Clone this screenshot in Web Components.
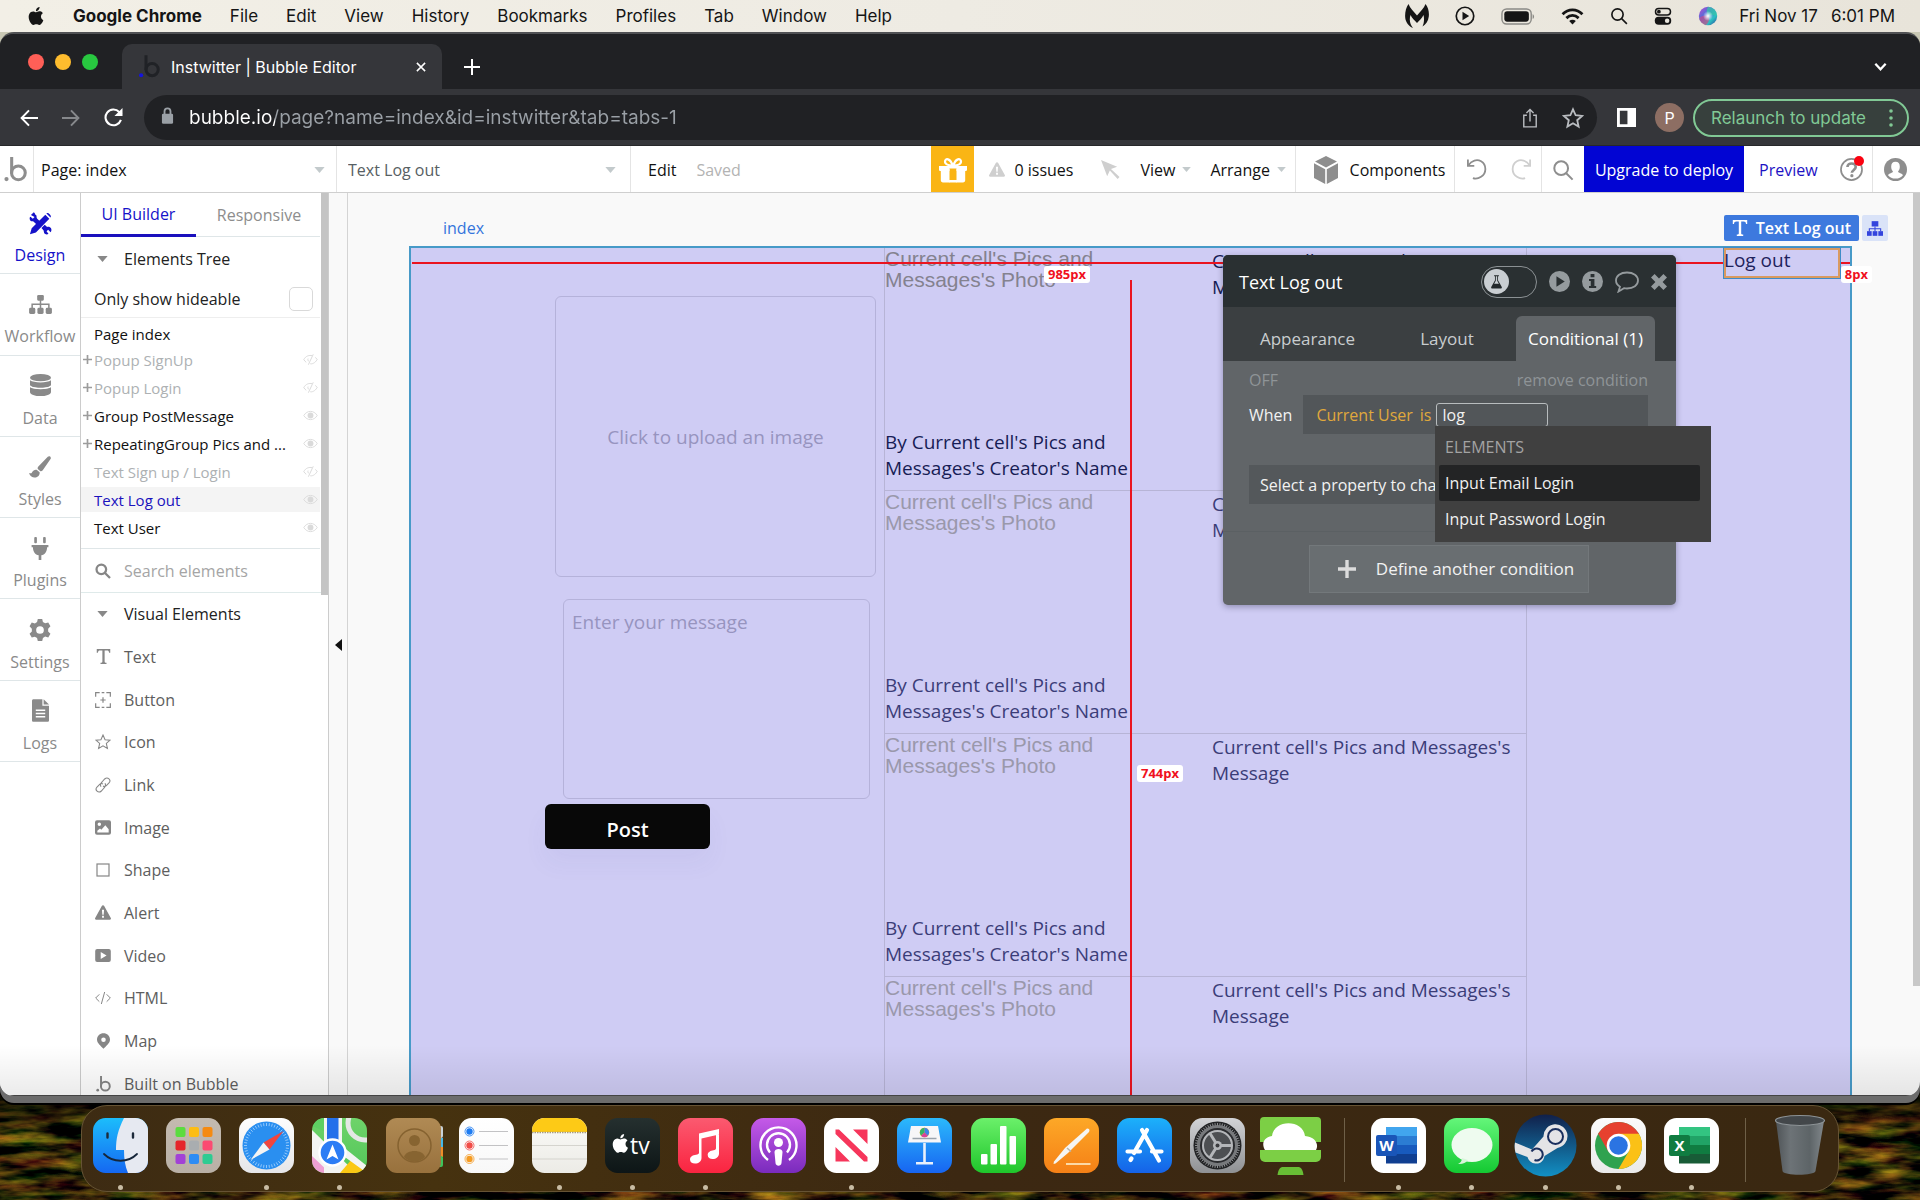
<!DOCTYPE html>
<html lang="en">
<head>
<meta charset="utf-8">
<title>Instwitter | Bubble Editor</title>
<style>
  html, body { margin: 0; height: 100%; }
  body { font-family: "Open Sans", "Noto Sans", sans-serif; font-size: 16px; line-height: 22px; color: #111; overflow: hidden; }
</style>
</head>
<body>
<mac-desktop>
  <mac-menubar></mac-menubar>
  <browser-window>
    <chrome-tabstrip></chrome-tabstrip>
    <chrome-toolbar></chrome-toolbar>
    <bubble-topbar></bubble-topbar>
    <bubble-workspace></bubble-workspace>
  </browser-window>
  <mac-dock></mac-dock>
</mac-desktop>

<script>
const RESET = `
  :host, *, *::before, *::after { box-sizing: border-box; }
  :host([hidden]) { display: none; }
  button, input, select, textarea { font: inherit; color: inherit; margin: 0; padding: 0; border: 0; background: none; outline: 0; border-radius: 0; }
  button { display: flex; align-items: center; justify-content: center; white-space: nowrap; }
  select { appearance: none; }
  textarea { resize: none; display: block; }
  a { color: inherit; text-decoration: none; }
  p { margin: 0; }
`;

function define(name, css, html) {
  customElements.define(name, class extends HTMLElement {
    constructor() {
      super();
      this.attachShadow({ mode: 'open' });
    }
    connectedCallback() {
      const body = typeof html === 'function' ? html(this) : html;
      this.shadowRoot.innerHTML = `<style>${RESET}${css}</style>${body}`;
    }
  });
}

/* ---------- icons ---------- */
const APPLE = '<path d="M12.152 6.896c-.948 0-2.415-1.078-3.96-1.04-2.04.027-3.91 1.183-4.961 3.014-2.117 3.675-.546 9.103 1.519 12.09 1.013 1.454 2.208 3.09 3.792 3.039 1.52-.065 2.09-.987 3.935-.987 1.831 0 2.35.987 3.96.948 1.637-.026 2.676-1.48 3.676-2.948 1.156-1.688 1.636-3.325 1.662-3.415-.039-.013-3.182-1.221-3.22-4.857-.026-3.04 2.48-4.494 2.597-4.559-1.429-2.09-3.623-2.324-4.39-2.376-2-.156-3.675 1.09-4.61 1.09zM15.53 3.83c.843-1.012 1.4-2.427 1.245-3.83-1.207.052-2.662.805-3.532 1.818-.78.896-1.454 2.338-1.273 3.714 1.338.104 2.715-.688 3.559-1.701"/>';
const S = (w, body, extra = '') => `<g fill="none" stroke="currentColor" stroke-width="${w}" ${extra}>${body}</g>`;
const ICONS = {
  apple: ['0 0 24 24', APPLE],
  malware: ['0 0 24 24', '<path d="M3.500 0c1.500 4 5 7.500 8.500 11.500C15.500 7.500 19 4 20.500 0c2.700 3 3.800 8 3.300 12.500-.5 4.500-3 8-6.300 10 1.500-3.500 2-7 1-11.500-1.500 3-4 5.500-6.500 8-2.500-2.500-5-5-6.500-8-1.500 5-.5 9.500 2.500 13C3.500 22 .600 18 .200 13.500-.200 8.500 1 3.500 3.500 0z"/>'],
  playcircle: ['0 0 24 24', S(2, '<circle cx="12" cy="12" r="10.500"/>') + '<path d="M9 7l8 5-8 5z"/>'],
  battery: ['0 0 36 20', '<rect x="1" y="2" width="31" height="16" rx="5" fill="none" stroke="#8b8a86" stroke-width="1.500"/><rect x="3.500" y="4.500" width="26" height="11" rx="3"/><path d="M33.500 7.500c2 .6 2 4.400 0 5z" fill="#8b8a86"/>'],
  wifi: ['0 0 24 18', S(3, '<path d="M1.500 6.500c6-6 15-6 21 0M5.500 10.700c4-3.700 9-3.700 13 0"/>') + '<path d="M8.500 13.700c2-1.800 5-1.800 7 0L12 17.500z"/>'],
  lens: ['0 0 24 24', S(2.2, '<circle cx="10" cy="10" r="7.500"/><path d="M15.500 15.500l7 7"/>')],
  lensbold: ['0 0 24 24', S(3.4, '<circle cx="9.500" cy="9.500" r="7.200"/><path d="M15 15l7.500 7.500"/>')],
  control: ['0 0 24 24', S(2, '<rect x="2" y="2" width="20" height="8.500" rx="4.250"/>') + '<circle cx="6.500" cy="6.250" r="2.500"/><rect x="1" y="13" width="22" height="10.500" rx="5.250"/><circle cx="17.500" cy="18.250" r="3" fill="#eae7df"/>'],
  siri: ['0 0 24 24', '<defs><linearGradient id="s" x1="0" y1="0" x2="1" y2="1"><stop offset="0" stop-color="#c64ad0"/><stop offset=".4" stop-color="#4a6fd8"/><stop offset=".7" stop-color="#2bc2c2"/><stop offset="1" stop-color="#303a9a"/></linearGradient><radialGradient id="t"><stop offset="0" stop-color="#fff"/><stop offset="1" stop-color="#fff" stop-opacity="0"/></radialGradient></defs><circle cx="12" cy="12" r="11" fill="url(#s)"/><path d="M12 1a11 11 0 0111 11c-4-2-7-1-11 0-2-4-2-7 0-11z" fill="#35c9a6" opacity=".7"/><path d="M1.500 15c3-4 7-4 10-3 3 3 2 7-2 11-4-1-7-4-8-8z" fill="#e0457f" opacity=".6"/><circle cx="12" cy="12" r="6" fill="url(#t)"/>'],
  close: ['0 0 16 16', S(2, '<path d="M2.500 2.500l11 11M13.500 2.500l-11 11"/>')],
  plus: ['0 0 16 16', S(2, '<path d="M8 0v16M0 8h16"/>')],
  plusbold: ['0 0 16 16', S(3, '<path d="M8 0v16M0 8h16"/>')],
  chevron: ['0 0 16 16', S(2.4, '<path d="M2.500 5l5.500 6 5.500-6"/>')],
  back: ['0 0 20 20', S(2.2, '<path d="M20 10H2.500M10 1.500L1.800 10l8.200 8.500"/>')],
  forward: ['0 0 20 20', S(2.2, '<path d="M0 10h17.500M10 1.500l8.200 8.500-8.200 8.500"/>')],
  reload: ['0 0 20 20', S(2.2, '<path d="M17.800 12.500A8.300 8.300 0 1116 4.200l2.500 2.600"/>') + '<path d="M19.500 0v8.500H11z"/>'],
  lock: ['0 0 14 18', '<rect x="1" y="7" width="12" height="11" rx="1.500"/>' + S(2, '<path d="M3.800 8V4.500a3.200 3.200 0 016.400 0V8"/>')],
  share: ['0 0 18 22', S(1.6, '<path d="M5.500 8H2v13h14V8h-3.500M9 15V1.500M5 5.500l4-4 4 4"/>')],
  star: ['0 0 24 24', S(2, '<path d="M12 2.500l2.900 6.500 7 .7-5.300 4.700 1.500 7L12 17.800l-6.100 3.600 1.500-7L2.100 9.700l7-.7z"/>')],
  starthin: ['0 0 24 24', S(1.6, '<path d="M12 1.500l3.100 7 7.600.7-5.700 5 1.600 7.500L12 17.800l-6.600 3.900L7 14.200l-5.700-5 7.600-.7z"/>')],
  sidepanel: ['0 0 20 20', '<path d="M0 0h20v20H0zM3 3v14h8V3z" fill-rule="evenodd"/>'],
  dots3: ['0 0 6 18', '<circle cx="3" cy="2" r="1.800"/><circle cx="3" cy="9" r="1.800"/><circle cx="3" cy="16" r="1.800"/>'],
  bubble: ['0 0 24 26', '<circle cx="2.600" cy="23" r="2.200"/>' + S(3.2, '<circle cx="15" cy="16.500" r="7.200"/><path d="M8 0v17"/>')],
  favicon: ['0 0 24 26', '<circle cx="2.400" cy="23" r="2.400" fill="#1414e0"/><g fill="none" stroke="#202226" stroke-width="3.400"><circle cx="15" cy="16.500" r="7"/><path d="M8 0v17"/></g>'],
  caret: ['0 0 12 7', '<path d="M0 0h12L6 7z"/>'],
  caretleft: ['0 0 7 12', '<path d="M7 0v12L0 6z"/>'],
  gift: ['0 0 28 26', '<path d="M0 9h10.500v5H1.500C.700 14 0 13.500 0 12.500zM17.500 9H28v3.500c0 1-.7 1.500-1.500 1.500h-9z"/><path d="M1.800 12h8.700v13.500H4c-1.300 0-2.200-.9-2.200-2.200zM17.500 12h8.700v11.300c0 1.300-.9 2.200-2.200 2.200h-6.500z"/><path d="M10 9h8v2.500h-8zM10 23h8v2.500h-8z"/>' + S(2.2, '<path d="M13.500 8.500C11 8.500 6 8 6 4.500S11.500 1 13.500 8.500zM14.500 8.500C17 8.500 22 8 22 4.500S16.500 1 14.500 8.500z"/>')],
  warn: ['0 0 24 22', '<path d="M12 0c.8 0 1.400.4 1.800 1.100l9.900 18c.8 1.400-.1 2.900-1.700 2.900H2c-1.600 0-2.500-1.500-1.700-2.900l9.900-18C10.600.4 11.200 0 12 0z"/><path d="M10.400 7h3.200l-.6 7.500h-2zM10.600 16h2.800v2.800h-2.800z" fill="#fff"/>'],
  pointer: ['0 0 20 20', '<path d="M0 0l17 7-6.500 2.500L19.500 18 17.500 20 9.300 11 6.500 17z"/>'],
  cube: ['0 0 24 28', '<path d="M12 0l11 5.600-11 6L1 5.600zM0 7.300l11.200 6V28L0 22zM24 7.300l-11.200 6V28L24 22z"/>'],
  undo: ['0 0 22 24', S(2, '<path d="M1 1.500v7h7M1.500 8C5 2.500 11 1 15.500 3.500c6.500 4 6 13.500 0 17C12.500 22.500 9 23 6.500 22"/>')],
  redo: ['0 0 22 24', S(2, '<path d="M21 1.500v7h-7M20.500 8C17 2.500 11 1 6.500 3.500c-6.500 4-6 13.500 0 17C9.500 22.500 13 23 15.500 22"/>')],
  help: ['0 0 24 24', S(1.8, '<circle cx="12" cy="12" r="11"/>') + S(2.8, '<path d="M7.800 9.500c0-5 8.600-5 8.600 0 0 3-4 3-4 6"/>') + '<circle cx="12.400" cy="18.500" r="1.700"/>'],
  user: ['0 0 24 24', '<circle cx="12" cy="12" r="12"/><path d="M12 4c3 0 4.500 2 4.500 5 0 2-.8 3.800-1.800 4.800 0 2 4.300 2 5.100 4.200A10 10 0 0112 21.500 10 10 0 014.200 18c.8-2.200 5.100-2.200 5.100-4.200-1-1-1.800-2.800-1.800-4.800 0-3 1.500-5 4.500-5z" fill="#fff"/>'],
  design: ['0 0 24 24', '<path d="M2 3.200L5 .3c1.500.6 1 2.600 2.600 3.200.6 1.500 0 2.600 1 3.500l3 3-3.400 3.300-3.300-3.200c-1-.9-2 .1-3.400-1C.300 7.500.500 5.500 1.500 5l2.500 2 1.800-1.700zM13 16.600l3.400-3.300 2.500 2.300c1.500-.5 3.500.1 4.200 1.500.6 1.600.3 3-.6 3.900L20 18.500l-1.700 1.700 2 2.600c-1.300.9-3.500.7-4.300-.5-.6-1-.4-2.200-.9-3.200z"/><path d="M17 2.800l4.200 4.200L7.200 21.300 1 23.300l1.800-6.400zM18.200 1.600c1.500-1.800 6 2.400 4.200 4.200z"/>'],
  workflow: ['0 0 24 20', '<rect x="8.500" width="7" height="6" rx="1.200"/><rect y="13.500" width="6.500" height="6.500" rx="1.500"/><rect x="8.750" y="13.500" width="6.500" height="6.500" rx="1.500"/><rect x="17.500" y="13.500" width="6.500" height="6.500" rx="1.500"/>' + S(1.6, '<path d="M12 5v9M3.200 14v-4.200h17.600V14"/>')],
  data: ['0 0 22 24', '<ellipse cx="11" cy="3.800" rx="11" ry="3.800"/><path d="M0 6.600c4 3 18 3 22 0v4.500c0 4.600-22 4.600-22 0zM0 13.700c4 3 18 3 22 0v5c0 5.800-22 5.800-22 0z"/><path d="M0 12.800c4 3 18 3 22 0" stroke="#fff" fill="none" stroke-width="1.400"/>'],
  brush: ['0 0 24 24', '<path d="M22.500.4c1.200.5 1.700 1.900 1 3L15 15.500c-.7.9-1.700 1.300-2.600 1l-2.800-2.300c-.4-1-.1-1.900.6-2.700L20.500.9c.6-.5 1.300-.7 2-.5z"/><path d="M8.300 15l3.300 2.800C12 21 9.500 24 5.500 23.500 2.500 23.200 1 21 0 18.500c1.800.9 2.800.3 3.400-.9.900-1.800 3-3 4.900-2.600z"/>'],
  plug: ['0 0 20 26', '<rect x="3.500" width="3" height="7" rx="1"/><rect x="13.500" width="3" height="7" rx="1"/><path d="M.5 9h19v2.500H18c0 5-2.500 8.300-6.500 9.200V26h-3v-5.300C4.500 19.800 2 16.500 2 11.500H.5z"/>'],
  gear: ['0 0 24 24', '<path fill-rule="evenodd" d="M9.600 0h4.800l.8 3.300 2.400 1.400 3.400-1L23.400 8l-2.500 2.500v3l2.500 2.500-2.400 4.200-3.400-1-2.400 1.500-.8 3.300H9.600l-.8-3.300-2.400-1.400-3.400 1L.6 16l2.500-2.500v-3L.6 8 3 3.800l3.400 1 2.400-1.500zM12 7.800a4.200 4.200 0 100 8.400 4.200 4.200 0 000-8.400z"/>'],
  doc: ['0 0 18 24', '<path fill-rule="evenodd" d="M0 1.500C0 .7.700 0 1.500 0H11v7h7v15.500c0 .8-.7 1.500-1.500 1.500h-15C.700 24 0 23.300 0 22.500zM4 11v1.600h10V11zm0 3.400V16h10v-1.600zM4 17.800v1.600h10v-1.600z"/><path d="M12.300 0L18 5.700h-5.700z"/>'],
  eye: ['0 0 24 18', S(1.5, '<path d="M1 9c5.500-9 16.500-9 22 0-5.500 9-16.500 9-22 0z"/>') + '<circle cx="12" cy="9" r="4.800"/>'],
  eyeoff: ['0 0 24 18', S(1.6, '<path d="M1 9C4.500 3 10 1.500 14.500 2.800M20 5.500c1.200 1 2.200 2.200 3 3.500-4 6.500-8.500 7.500-11.500 7M5 13.500C3.500 12.500 2 11 1 9M16.500.5l-8 17M8 7.500c-.8 2.500 0 3.500 1.500 4.500"/>')],
  text: ['0 0 20 20', '<path d="M1 0h18v5h-1.500c-.3-2.200-1-3-3-3h-3v14.500c0 1.300.6 1.600 2.500 1.700V20H6v-1.800c1.900-.1 2.500-.4 2.500-1.700V2h-3c-2 0-2.700.8-3 3H1z"/>'],
  button: ['0 0 24 24', S(1.8, '<path d="M1 7V1h6M17 1h6v6M23 17v6h-6M7 23H1v-6M10 1h4M10 23h4M12 8v8M8 12h8"/>')],
  link: ['0 0 24 24', S(1.6, '<path d="M9 14.500C7 11 9 9 10.500 7.500l4-4.500c4.500-4 10.500 1.500 6.500 6l-4 4c-1.500 1.500-3.500 1.500-5 .5M15 9.500c2 3.500 0 5.500-1.500 7l-4 4.500C5 25-1 19.500 3 15l4-4c1.500-1.500 3.500-1.500 5-.5"/>')],
  image: ['0 0 24 22', '<path fill-rule="evenodd" d="M3 0h18a3 3 0 013 3v16a3 3 0 01-3 3H3a3 3 0 01-3-3V3a3 3 0 013-3zm3.500 3.500a2.600 2.600 0 100 5.200 2.600 2.600 0 000-5.200zM3.500 18.500h17v-5l-5-6-6 7-2-2-4 3.500z"/>'],
  shape: ['0 0 24 24', S(1.8, '<rect x="3" y="3" width="18" height="18"/>')],
  video: ['0 0 24 20', '<path fill-rule="evenodd" d="M3 0h18a3 3 0 013 3v14a3 3 0 01-3 3H3a3 3 0 01-3-3V3a3 3 0 013-3zm5.500 4.500v11l9-5.500z"/>'],
  html: ['0 0 24 18', S(1.5, '<path d="M6.500 3.500L1 9l5.500 5.500M17.500 3.500L23 9l-5.500 5.500M14.500 0l-5 18"/>')],
  map: ['0 0 20 24', '<path fill-rule="evenodd" d="M10 0c5.500 0 10 4 10 9.500 0 6-6 9.500-10 14.500C6 19 0 15.500 0 9.500 0 4 4.500 0 10 0zm0 6.500a3.500 3.500 0 100 7 3.500 3.500 0 000-7z"/>'],
  tree: ['0 0 24 22', '<rect x="7" width="10" height="8"/><rect y="15" width="7" height="7"/><rect x="8.500" y="15" width="7" height="7"/><rect x="17" y="15" width="7" height="7"/>' + S(1.6, '<path d="M12 8v7M3.500 15v-3.500h17V15"/>')],
  flask: ['0 0 16 20', '<path d="M4.500 0h7v1.500h-1.300v6L15.500 17c.8 1.500 0 2.500-1.500 2.500H2C.500 19.500-.3 18.500.5 17L5.800 7.500v-6H4.500z"/><path d="M7 1.500h2v6.500l2.500 4.500h-7L7 8z" fill="#c9ced2"/>'],
  play: ['0 0 24 24', '<circle cx="12" cy="12" r="12"/><path d="M8.500 6l9.500 6-9.500 6z" fill="#2a3032"/>'],
  info: ['0 0 24 24', '<circle cx="12" cy="12" r="12"/><path d="M9.800 3.500h4.400V7H9.800zM8 9h6.200v8h2v2.500H8V17h2v-5.500H8z" fill="#2a3032"/>'],
  chat: ['0 0 24 22', S(1.8, '<path d="M12 1.500C18.500 1.500 23 5 23 9.500s-4.500 8-11 8c-1 0-2-.1-3-.3L3.500 20.500 5 15.700C2.500 14.200 1 12 1 9.500 1 5 5.500 1.500 12 1.500z"/>')],
  cross: ['0 0 20 20', '<path d="M4.500 0L10 5.500 15.500 0 20 4.500 14.500 10l5.500 5.500-4.500 4.500L10 14.500 4.500 20 0 15.500 5.500 10 0 4.500z"/>'],
};

define('ui-icon', `
  :host { display: inline-flex; flex: none; }
  svg { display: block; fill: currentColor; }
`, el => {
  const [vb, body] = ICONS[el.getAttribute('name')];
  const [, , w, h] = vb.split(' ').map(Number);
  const width = Number(el.getAttribute('size'));
  return `<svg viewBox="${vb}" width="${width}" height="${Math.round(width * h / w)}" aria-hidden="true">${body}</svg>`;
});
const icon = (name, size) => `<ui-icon name="${name}" size="${size}"></ui-icon>`;

/* ---------- desktop ---------- */
define('mac-desktop', `
  :host { display: flex; flex-direction: column; height: 100vh; position: relative; isolation: isolate; background: #2c1a0c; }
  .wall { position: absolute; left: 0; bottom: 0; width: 100%; height: 110px; z-index: -1; display: block; }
`, `
  <svg class="wall" preserveAspectRatio="none" aria-hidden="true">
    <defs>
      <filter id="n" x="0" y="0" width="100%" height="100%" color-interpolation-filters="sRGB">
        <feTurbulence type="fractalNoise" baseFrequency="0.02 0.09" numOctaves="4" seed="8"/>
        <feColorMatrix values="1.700 0 0 0 -.6  1.200 .5 0 0 -.66  .2 0 0 0 -.06  0 0 0 0 1"/>
      </filter>
      <linearGradient id="d" x1="0" y1="0" x2="0" y2="1"><stop offset="0" stop-color="#000" stop-opacity=".8"/><stop offset=".4" stop-color="#000" stop-opacity=".15"/><stop offset="1" stop-color="#000" stop-opacity=".25"/></linearGradient>
    </defs>
    <rect width="100%" height="100%" filter="url(#n)"/>
    <rect width="100%" height="100%" fill="url(#d)"/>
  </svg>
  <slot></slot>
`);

define('mac-menubar', `
  :host { display: flex; align-items: center; justify-content: space-between; height: 32px; flex: none; padding: 0 25px 0 27px;
    background: linear-gradient(90deg, #f2efe6, #eeebe3 50%, #e8e4da); font: 17px/20px Inter, "Liberation Sans", sans-serif; color: #151515; box-shadow: 0 20px 0 #c9c8b4; }
  nav, .status { display: flex; align-items: center; }
  nav { gap: 28px; }
  .status { gap: 26px; }
  .app { font-weight: 700; }
  time { display: flex; gap: 13px; margin-left: -5px; }
`, `
  <nav>
    <button aria-label="Apple menu">${icon('apple', 18)}</button>
    <button class="app">Google Chrome</button>
    ${['File', 'Edit', 'View', 'History', 'Bookmarks', 'Profiles', 'Tab', 'Window', 'Help'].map(t => `<button>${t}</button>`).join('')}
  </nav>
  <div class="status">
    ${icon('malware', 24)}${icon('playcircle', 20)}${icon('battery', 34)}${icon('wifi', 23)}${icon('lens', 18)}${icon('control', 18)}${icon('siri', 20)}
    <time><span>Fri Nov 17</span><span>6:01 PM</span></time>
  </div>
`);

define('browser-window', `
  :host { display: flex; flex-direction: column; flex: 1; min-height: 0; position: relative; border-radius: 14px; border-top: 2px solid #505154; overflow: hidden; background: #202124;
    box-shadow: 0 7px 0 #6c6c6c, 0 9px 0 #000; }
  :host::after { content: ""; position: absolute; left: 0; right: 0; bottom: 0; height: 50px; background: linear-gradient(transparent, rgba(0,0,0,.08)); border-bottom: 1px solid #444; pointer-events: none; }
`, `<slot></slot>`);

/* ---------- chrome ---------- */
define('chrome-tabstrip', `
  :host { display: flex; align-items: flex-end; flex: none; height: 55px; background: #202124; color: #fff; font: 16px/20px Inter, "Liberation Sans", sans-serif; }
  .lights { display: flex; gap: 11px; padding: 0 24px 19px 28px; }
  .lights i { width: 16px; height: 16px; border-radius: 50%; }
  .tab { display: flex; align-items: center; width: 320px; height: 45px; padding: 0 15px 0 17px; gap: 11px; background: #35363a; border-radius: 10px 10px 0 0; }
  .tab span { flex: 1; }
  .new { height: 45px; padding-left: 22px; }
  .more { height: 45px; margin-left: auto; padding-right: 32px; }
`, `
  <div class="lights"><i style="background:#ff5f57"></i><i style="background:#febc2e"></i><i style="background:#28c840"></i></div>
  <div class="tab">${icon('favicon', 21)}<span>Instwitter | Bubble Editor</span><button aria-label="Close tab">${icon('close', 12)}</button></div>
  <button class="new" aria-label="New tab">${icon('plus', 16)}</button>
  <button class="more" aria-label="Search tabs">${icon('chevron', 15)}</button>
`);

define('chrome-toolbar', `
  :host { display: flex; align-items: center; flex: none; height: 57px; padding: 1px 11px 0 20px; background: #35363a; color: #fff; font: 19px/24px Inter, sans-serif; border-bottom: 1px solid #27282a; }
  .nav { display: flex; gap: 24px; width: 124px; flex: none; }
  .fwd { color: #86888b; }
  .omni { flex: 1; display: flex; align-items: center; height: 45px; border-radius: 23px; background: #202124; padding: 0 13px 0 17px; color: #b9bcc0; }
  .omni input { flex: 1; min-width: 0; margin-left: 15px; color: #9aa0a6; -webkit-text-fill-color: transparent;
    background: linear-gradient(90deg, #fff 0 86px, #9aa0a6 86px) no-repeat; -webkit-background-clip: text; background-clip: text; }
  .omni button { margin-left: 24px; }
  .lock { color: #9aa0a6; }
  .side { margin-left: 20px; }
  .me { width: 29px; height: 29px; margin: 0 9px 0 19px; border-radius: 50%; background: #8d6e63; font-size: 16px; }
  .relaunch { height: 38px; width: 216px; justify-content: space-between; padding: 0 13px 0 16px; border: 2px solid #81c995; border-radius: 19px; color: #81c995; background: #37403d; font-size: 17px; }
`, `
  <div class="nav"><button aria-label="Back">${icon('back', 18)}</button><button class="fwd" aria-label="Forward">${icon('forward', 18)}</button><button aria-label="Reload">${icon('reload', 19)}</button></div>
  <div class="omni"><span class="lock">${icon('lock', 13)}</span>
    <input aria-label="Address" value="bubble.io/page?name=index&amp;id=instwitter&amp;tab=tabs-1">
    <button aria-label="Share">${icon('share', 16)}</button><button aria-label="Bookmark">${icon('star', 22)}</button></div>
  <button class="side" aria-label="Side panel">${icon('sidepanel', 19)}</button>
  <button class="me">P</button>
  <button class="relaunch"><span>Relaunch to update</span>${icon('dots3', 6)}</button>
`);

/* ---------- bubble top bar ---------- */
define('bubble-topbar', `
  :host { display: block; flex: none; background: #fff; border-bottom: 1px solid #cfcfcf; font-size: 16px; color: #111; }
  .bar { display: flex; align-items: stretch; height: 46px; }
  .bar > * { display: flex; align-items: center; flex: none; padding-top: 1px; }
  .sep { border-right: 1px solid #e4e4e4; }
  .logo { width: 34px; padding-left: 4px; color: #8e8e8e; }
  .drop { width: 303px; padding-right: 11px; color: #111; }
  .drop select { flex: 1; height: 100%; padding-left: 7px; }
  .el { width: 294px; padding-right: 14px; color: #576063; }
  .el select { padding-left: 11px; }
  ui-icon { color: #8e8e8e; }
  .drop ui-icon, .menu ui-icon { color: #c3cacc; }
  .edit { padding-left: 17px; gap: 20px; }
  .saved { color: #b3b3b3; }
  .bar .fill { flex: 1; }
  .gift { width: 43px; background: #fab515; }
  .gift ui-icon { color: #fff; }
  .issues { width: 114px; padding-left: 15px; gap: 9px; justify-content: flex-start; }
  .issues ui-icon, .ptr ui-icon, .redo ui-icon { color: #cfcfcf; }
  .ptr { width: 52px; padding-left: 13px; justify-content: flex-start; }
  .menu { gap: 7px; margin-right: 19px; }
  .menu.last { margin-right: 9px; }
  .comp { width: 160px; gap: 12px; padding-left: 9px; border-left: 1px solid #e4e4e4; }
  .hist { width: 87px; justify-content: space-between; padding: 0 10px 0 12px; }
  .find { width: 42px; }
  .up { width: 160px; background: #0205d3; color: #fff; }
  .prev { color: #1d12c4; padding-left: 15px; width: 96px; }
  .help { position: relative; width: 33px; padding-right: 9px; }
  .help::after { content: ""; position: absolute; left: 14px; top: 10px; width: 10px; height: 10px; border-radius: 50%; background: #fb0210; }
  .acct { width: 47px; padding-right: 2px; }
`, `<div class="bar">
  <a class="logo sep" href="#" aria-label="Home">${icon('bubble', 23)}</a>
  <div class="drop sep"><select aria-label="Page"><option>Page: index</option></select>${icon('caret', 11)}</div>
  <div class="drop el sep"><select aria-label="Element"><option>Text Log out</option></select>${icon('caret', 11)}</div>
  <div class="edit"><button>Edit</button><span class="saved">Saved</span></div>
  <span class="fill"></span>
  <button class="gift" aria-label="What's new">${icon('gift', 28)}</button>
  <button class="issues">${icon('warn', 16)}0 issues</button>
  <button class="ptr" aria-label="Pointer">${icon('pointer', 19)}</button>
  <button class="menu">View ${icon('caret', 9)}</button>
  <button class="menu last">Arrange ${icon('caret', 9)}</button>
  <button class="comp sep">${icon('cube', 24)}Components</button>
  <div class="hist sep"><button aria-label="Undo">${icon('undo', 20)}</button><button class="redo" aria-label="Redo">${icon('redo', 20)}</button></div>
  <button class="find" aria-label="Search">${icon('lens', 22)}</button>
  <button class="up">Upgrade to deploy</button>
  <a class="prev" href="#">Preview</a>
  <button class="help sep" aria-label="Help">${icon('help', 23)}</button>
  <button class="acct" aria-label="Account">${icon('user', 23)}</button>
</div>`);

/* ---------- workspace ---------- */
define('bubble-workspace', `
  :host { display: flex; flex: 1; min-height: 0; background: #f9f9f9; }
  .fold { width: 19px; flex: none; border-right: 1px solid #d4d4d4; color: #111; height: 100%; }
`, `
  <side-rail></side-rail><elements-panel></elements-panel>
  <button class="fold" aria-label="Collapse panel">${icon('caretleft', 7)}</button>
  <editor-canvas></editor-canvas>
`);

define('side-rail', `
  :host { display: block; flex: none; width: 81px; background: #fff; border-right: 1px solid #ccc; color: #8a8a8a; }
  nav { display: grid; grid-auto-rows: 1fr; height: 569px; }
  button { flex-direction: column; width: 100%; padding-top: 6px; border-bottom: 1px solid #dfe6e8; }
  .ic { display: flex; align-items: center; height: 34px; margin-bottom: 4px; }
  button.on { color: #1512c9; }
`, `<nav>${[['design', 'Design', 23], ['workflow', 'Workflow', 23], ['data', 'Data', 21], ['brush', 'Styles', 22], ['plug', 'Plugins', 18], ['gear', 'Settings', 22], ['doc', 'Logs', 17]]
  .map(([i, t, s], n) => `<button class="${n ? '' : 'on'}"><span class="ic">${icon(i, s)}</span>${t}</button>`).join('')}</nav>`);

define('tree-row', `
  :host { display: flex; align-items: center; height: 25px; margin-bottom: 3px; padding: 0 2px; font-size: 15px; color: #111; white-space: nowrap; }
  :host([root]) { margin-bottom: 1px; }
  :host([off]) { color: #adb1b3; }
  :host([selected]) { background: #f4f4f4; color: #1a12bd; }
  .exp { width: 11px; color: #9c9c9c; display: flex; }
  .name { flex: 1; }
  .eye { color: #dadada; display: flex; }
`, el => `
  <span class="exp">${el.hasAttribute('expandable') ? icon('plusbold', 9) : ''}</span>
  <span class="name"><slot></slot></span>
  <span class="eye">${el.hasAttribute('root') ? '' : icon(el.hasAttribute('off') ? 'eyeoff' : 'eye', 15)}</span>
`);

define('palette-row', `
  :host { display: flex; }
  button { width: 100%; padding-left: 14px; gap: 13px; justify-content: flex-start; color: #5e5e5e; }
  .ic { width: 16px; display: flex; justify-content: center; color: #868686; }
`, el => `<button><span class="ic">${icon(el.getAttribute('icon'), Number(el.getAttribute('size') || 16))}</span><slot></slot></button>`);

define('elements-panel', `
  :host { display: flex; flex-direction: column; flex: none; width: 248px; background: #fff; border-right: 1px solid #ccc; overflow: hidden; }
  .top { flex: none; padding-right: 8px; position: relative; }
  .top::after { content: ""; position: absolute; right: 0; top: 0; bottom: -2px; width: 7px; background: #c4c4c4; }
  .tabs { display: flex; height: 44px; border-bottom: 1px solid #dfe6e8; }
  .tabs button { flex: 1; height: 44px; padding-left: 2px; color: #8d8d8d; }
  .tabs button.on { flex: 0 0 115px; padding: 0; color: #1512c9; border-bottom: 3px solid #1a10bd; }
  .head { width: 100%; height: 44px; padding-left: 16px; gap: 16px; justify-content: flex-start; color: #222; }
  .head ui-icon { color: #888; }
  .hide { display: flex; align-items: center; justify-content: space-between; height: 37px; padding: 0 7px 1px 13px; color: #222; border-bottom: 1px solid #eee; }
  .hide input { appearance: none; width: 24px; height: 24px; border: 1px solid #d9d9d9; border-radius: 5px; }
  .tree { padding-top: 3px; height: 231px; border-bottom: 1px solid #dfe6e8; }
  .search { display: flex; align-items: center; height: 44px; gap: 13px; padding-left: 14px; color: #868686; border-bottom: 1px solid #dfeaea; margin-right: -8px; }
  .search input { flex: 1; min-width: 0; }
  .search input::placeholder { color: #a5a5a5; opacity: 1; }
  .list { flex: none; display: grid; grid-auto-rows: 1fr; height: 512px; }
  .list .head { height: auto; }
`, `
  <div class="top">
    <div class="tabs" role="tablist"><button class="on" role="tab">UI Builder</button><button role="tab">Responsive</button></div>
    <button class="head">${icon('caret', 11)}Elements Tree</button>
    <label class="hide">Only show hideable<input type="checkbox"></label>
    <div class="tree">
      <tree-row root>Page index</tree-row>
      <tree-row expandable off>Popup SignUp</tree-row>
      <tree-row expandable off>Popup Login</tree-row>
      <tree-row expandable>Group PostMessage</tree-row>
      <tree-row expandable>RepeatingGroup Pics and ...</tree-row>
      <tree-row off>Text Sign up / Login</tree-row>
      <tree-row selected>Text Log out</tree-row>
      <tree-row>Text User</tree-row>
    </div>
    <label class="search">${icon('lensbold', 16)}<input type="text" placeholder="Search elements" aria-label="Search elements"></label>
  </div>
  <div class="list">
    <button class="head">${icon('caret', 11)}Visual Elements</button>
    <palette-row icon="text" size="15">Text</palette-row>
    <palette-row icon="button">Button</palette-row>
    <palette-row icon="starthin">Icon</palette-row>
    <palette-row icon="link">Link</palette-row>
    <palette-row icon="image">Image</palette-row>
    <palette-row icon="shape">Shape</palette-row>
    <palette-row icon="warn">Alert</palette-row>
    <palette-row icon="video">Video</palette-row>
    <palette-row icon="html">HTML</palette-row>
    <palette-row icon="map" size="13">Map</palette-row>
    <palette-row icon="bubble" size="15">Built on Bubble</palette-row>
  </div>
`);

/* ---------- canvas ---------- */
define('group-cell', `
  :host { display: flex; height: 243px; border-bottom: 1px solid #b7b4d6; font-size: 19px; line-height: 26px; color: #3b3d78; }
  :host([live]) { color: #171c55; }
  .left { display: flex; flex-direction: column; justify-content: space-between; width: 246px; margin-right: 81px; padding-bottom: 9px; }
  .photo { font: 21px/21px "Liberation Sans", Arial, sans-serif; color: #9a98ab; }
  :host([live]) .photo { color: #84828f; }
  .msg { flex: 1; }
`, el => `
  <div class="left"><p class="photo">Current cell's Pics and Messages's Photo</p>${el.hasAttribute('partial') ? '' : `<p>By Current cell's Pics and Messages's Creator's Name</p>`}</div>
  <p class="msg">Current cell's Pics and Messages's Message</p>
`);

define('post-form', `
  :host { display: flex; flex-direction: column; flex: none; width: 473px; padding: 48px 0 0 134px; font-size: 19px; color: #9794bf; }
  .upload { width: 321px; height: 281px; margin: 0 0 22px 10px; border: 1px solid #b5b2da; border-radius: 6px; }
  textarea { width: 307px; height: 200px; margin: 0 0 5px 18px; padding: 11px 8px; border: 1px solid #b5b2da; border-radius: 6px; }
  textarea::placeholder { color: #9794bf; opacity: 1; }
  .post { width: 165px; height: 45px; padding-top: 6px; background: #080808; border-radius: 6px; color: #fff; font-size: 20px; font-weight: 600; box-shadow: 0 14px 24px rgba(80,70,160,.05); }
`, `
  <button class="upload">Click to upload an image</button>
  <textarea placeholder="Enter your message" aria-label="Message"></textarea>
  <button class="post">Post</button>
`);

define('measure-label', `
  :host { position: absolute; z-index: 1; padding: 0 4px; background: #fff; border-radius: 3px; color: #f01020; font-size: 13px; font-weight: 700; line-height: 17px; }
`, `<slot></slot>`);

define('editor-canvas', `
  :host { display: flex; flex-direction: column; flex: 1; min-width: 0; position: relative; padding-left: 61px; overflow: hidden; }
  :host::after { content: ""; position: absolute; right: 0; top: 0; bottom: 110px; width: 7px; background: #c8c8c8; }
  .bar { flex: none; display: flex; align-items: center; gap: 3px; height: 53px; padding: 17px 32px 0 34px; }
  .bar > * { height: 26px; }
  .name { color: #3575dc; font-weight: 500; line-height: 26px; margin-right: auto; }
  .tag { background: #3d79de; color: #fff; font-weight: 600; padding: 0 8px; gap: 8px; border-radius: 2px; }
  .up { width: 26px; background: #dae3f8; color: #3344dd; border-radius: 2px; }
  .page { flex: 1; min-height: 0; position: relative; display: flex; margin-right: 68px; border: 2px solid #479ac8; border-bottom: 0; background: #cfccf4; }
  .group { flex: none; width: 643px; border: solid #b7b4d6; border-width: 0 1px; overflow: hidden; }
  .rest { flex: 1; display: flex; justify-content: flex-end; align-items: flex-start; }
  .logout { position: relative; z-index: 1; width: 116px; height: 30px; margin-right: 10px; background: #cfccf4; box-shadow: inset 0 0 0 2px #d99a60; outline: 1px solid #3f8cc8; font-size: 19px; line-height: 24px; color: #1f235c; }
  .h, .v { position: absolute; background: #ea1420; }
  .h { left: 1px; right: 0; top: 14px; height: 2px; }
  .v { left: 719px; top: 32px; bottom: 0; width: 2px; }
  .m1 { left: 633px; top: 18px; } .m2 { left: 726px; top: 517px; } .m3 { right: -22px; top: 18px; }
  property-editor { position: absolute; z-index: 2; right: 244px; top: 62px; }
`, `
  <div class="bar"><span class="name">index</span><button class="tag">${icon('text', 16)}Text Log out</button><button class="up" aria-label="Select parent">${icon('tree', 16)}</button></div>
  <div class="page">
    <post-form></post-form>
    <div class="group"><group-cell live></group-cell><group-cell></group-cell><group-cell></group-cell><group-cell partial></group-cell></div>
    <div class="rest"><div class="logout">Log out</div></div>
    <i class="h"></i><i class="v"></i>
    <measure-label class="m1">985px</measure-label><measure-label class="m2">744px</measure-label><measure-label class="m3">8px</measure-label>
  </div>
  <property-editor></property-editor>
`);

define('option-list', `
  :host { position: absolute; z-index: 3; left: 212px; top: 171px; width: 276px; height: 116px; padding: 4px 11px 4px 4px; background: #404040; color: #f0f0f0; }
  .title { height: 35px; padding: 0 6px; line-height: 35px; color: #a3a3a3; }
  button { width: 100%; height: 36px; padding: 0 6px; justify-content: flex-start; }
  button.on { background: #232425; border-radius: 2px; }
`, `<div class="title">ELEMENTS</div><button class="on">Input Email Login</button><button>Input Password Login</button>`);

define('property-editor', `
  :host { display: block; width: 453px; height: 350px; background: #616568; color: #f2f2f2; border-radius: 5px; box-shadow: 0 2px 6px rgba(30,30,60,.35); }
  header { display: flex; align-items: center; height: 52px; padding: 1px 9px 0 16px; background: #2a3032; border-radius: 5px 5px 0 0; color: #959b9e; }
  h2 { flex: 1; margin: 0; font-size: 18px; font-weight: 400; color: #fff; }
  .toggle { width: 56px; height: 32px; margin-right: 12px; justify-content: flex-start; padding-left: 2px; border: 1px solid #8b9194; border-radius: 16px; }
  .knob { display: flex; align-items: center; justify-content: center; width: 25px; height: 25px; border-radius: 50%; background: #c9ced2; color: #22282a; }
  header button:not(.toggle) { margin-right: 12px; }
  header button.x:not(.toggle) { margin-right: 0; }
  .tabs { display: flex; align-items: flex-end; height: 54px; padding: 0 21px 0 20px; background: #3b3f41; font-size: 17px; color: #c9cdcf; }
  .tabs button { height: 45px; width: 129px; }
  .tabs button.lay { width: 140px; padding-right: 16px; padding-left: 26px; }
  .tabs button.on { width: 139px; margin-left: auto; background: #616568; border-radius: 6px 6px 0 0; color: #fff; }
  .row { display: flex; align-items: center; justify-content: space-between; height: 34px; padding: 4px 28px 0 26px; color: #8f9497; }
  .when { display: flex; align-items: center; height: 39px; padding: 0 28px 0 26px; gap: 11px; }
  .expr { flex: 1; display: flex; align-items: center; height: 39px; padding-left: 13px; background: #525659; color: #e0a93c; }
  .expr input { width: 112px; height: 24px; padding: 0 6px; margin-left: 4px; border: 1px solid #b8bcbe; border-radius: 3px; color: #f2f2f2; }
  .is { margin-left: 7px; }
  .prop { display: block; width: 399px; height: 39px; margin: 31px 0 0 26px; padding: 0 11px; background: #54585b; }
  .end { height: 28px; border-bottom: 1px solid #5b6063; margin-bottom: 13px; }
  .add { width: 280px; height: 48px; margin: 0 auto 0 86px; padding-left: 14px; gap: 20px; background: #696e71; border: 1px solid #73787b; font-size: 17px; }
  .add ui-icon { color: #dcdcdc; }
`, `
  <header><h2>Text Log out</h2>
    <button class="toggle" aria-label="Experimental"><span class="knob">${icon('flask', 11)}</span></button>
    <button aria-label="Play">${icon('play', 21)}</button><button aria-label="Info">${icon('info', 21)}</button><button aria-label="Comment">${icon('chat', 24)}</button><button class="x" aria-label="Close">${icon('cross', 16)}</button>
  </header>
  <div class="tabs" role="tablist"><button role="tab">Appearance</button><button class="lay" role="tab">Layout</button><button class="on" role="tab">Conditional (1)</button></div>
  <div class="row"><button>OFF</button><button>remove condition</button></div>
  <div class="when"><label for="cond">When</label><div class="expr"><span>Current User</span><span class="is">is</span><input id="cond" type="text" value="log"></div></div>
  <select class="prop" aria-label="Property"><option>Select a property to change when true</option></select>
  <div class="end"></div>
  <button class="add">${icon('plusbold', 18)}Define another condition</button>
  <option-list></option-list>
`);

/* ---------- dock ---------- */
const grad = (id, a, b) => `<linearGradient id="${id}" x1="0" y1="0" x2="0" y2="1"><stop offset="0" stop-color="${a}"/><stop offset="1" stop-color="${b}"/></linearGradient>`;
const tile = (a, b, body = '') => `<defs>${grad('g', a, b)}<clipPath id="c"><rect width="55" height="55" rx="12.500"/></clipPath></defs><g clip-path="url(#c)"><rect width="55" height="55" fill="url(#g)"/>${body}</g>`;
const ticks = (cx, cy, r, n, len, col, w) => Array.from({ length: n }, (_, i) => { const a = i / n * 2 * Math.PI; return `<path d="M${(cx + Math.cos(a) * r).toFixed(2)} ${(cy + Math.sin(a) * r).toFixed(2)}L${(cx + Math.cos(a) * (r - len)).toFixed(2)} ${(cy + Math.sin(a) * (r - len)).toFixed(2)}" stroke="${col}" stroke-width="${w}"/>`; }).join('');
const office = (label, c1, c2, c3, c4, box) => tile('#fff', '#fff', `<rect x="15" y="9" width="31" height="9.500" fill="${c1}"/><rect x="15" y="18" width="31" height="9.500" fill="${c2}"/><rect x="15" y="27" width="31" height="9.500" fill="${c3}"/><rect x="15" y="36" width="31" height="9.500" fill="${c4}"/><rect x="5" y="17" width="21" height="21" rx="2" fill="${box}"/><text x="15.500" y="33" font-size="15" font-weight="700" font-family="Open Sans" fill="#fff" text-anchor="middle">${label}</text>`);
const DOCK = {
  finder: tile('#1cbdfb', '#1568f2', `<path d="M31 0C25 12 23 20 23 32h8c0 9 1 16 4 23h20V0z" fill="#e6e9f1"/><path d="M14.500 15.500v4M40 15.500v4" stroke="#1d2a3a" stroke-width="2.400" stroke-linecap="round"/><path d="M11 36c9 9 24 9 33 0" fill="none" stroke="#16263a" stroke-width="1.800" stroke-linecap="round"/>`),
  launchpad: tile('#c3bab0', '#b9b0a6', [['#5bdc3f', '#fdbd14', '#f58a11'], ['#e5252b', '#a9adb0', '#fb4a72'], ['#a241d6', '#2f8cf4', '#2ecb92']].map((r, y) => r.map((c, x) => `<rect x="${9.500 + x * 13.500}" y="${9 + y * 13.500}" width="10" height="10" rx="2" fill="${c}"/>`).join('')).join('')),
  safari: tile('#fdfdfd', '#e6e6e8', `<circle cx="27.500" cy="27.500" r="24" fill="#2a8ff0"/>${ticks(27.500, 27.500, 22.500, 48, 3, '#bfe0ff', .7)}<path d="M44.500 13L30.500 31.500 24.500 24.500z" fill="#f1453d"/><path d="M11.500 42L24.500 24.500 30.500 31.500z" fill="#f4f4f4"/>`),
  maps: tile('#6fd36a', '#53c65a', `<path d="M0 22L30 55H0z" fill="#ee9fd2"/><path d="M0 12l44 43H18L0 38z" fill="#f3f4f2"/><path d="M28 55l12-14 15 13v1z" fill="#fbc814"/><path d="M0 0h14v14L0 8z" fill="#5ed062"/><path d="M12 0h18v28L55 48v7L12 24z" fill="#f3f4f2"/><rect x="15" width="11.500" height="26" fill="#2470ea"/><path d="M12 36h6v19h-6zM22 46h6v9h-6z" fill="#f3f4f2"/><circle cx="53" cy="5" r="17" fill="none" stroke="#e4e7e5" stroke-width="5"/><circle cx="20.500" cy="34.500" r="13" fill="#2c7df5" stroke="#fff" stroke-width="2.400"/><path d="M20.500 26.500l6 15-6-3.500-6 3.500z" fill="#fff"/>`),
  contacts: `<defs>${grad('g', '#b08a54', '#98713d')}</defs><rect x="40" y="8" width="17" height="12" rx="2" fill="#c9d2d8"/><rect x="40" y="20" width="17" height="10" fill="#46b9e8"/><rect x="40" y="29" width="17" height="10" fill="#f08c28"/><rect x="40" y="38" width="17" height="11" rx="2" fill="#3ec45a"/><rect width="55" height="55" rx="11" fill="url(#g)"/><circle cx="28.500" cy="27.500" r="16.500" fill="none" stroke="#856230" stroke-width="1.500"/><circle cx="28.500" cy="22.500" r="5.500" fill="#876431"/><path d="M18 39c2-8 19-8 21 0-6 6-15 6-21 0z" fill="#876431"/>`,
  reminders: tile('#fff', '#f8f8f8', [['#1e7cf2', 13.500], ['#f14c47', 27.500], ['#f59c24', 41]].map(([c, y]) => `<circle cx="10.500" cy="${y}" r="3.200" fill="${c}"/><circle cx="10.500" cy="${y}" r="4.500" fill="none" stroke="${c}" stroke-width=".8"/><path d="M20 ${y}h29" stroke="#c2c2c4" stroke-width="1"/>`).join('')),
  notes: tile('#fbfbf8', '#ecebe6', `<rect width="55" height="14" fill="#fdca16"/><path d="M0 14.500h55" stroke="#a89c7c" stroke-width="1.500" stroke-dasharray="1.500 1"/><path d="M0 27.500h55M0 41h55" stroke="#d5d4ce"/>`),
  tv: tile('#25302f', '#0d1516', `<g transform="translate(6 16) scale(.78)" fill="#fff">${APPLE}</g><text x="25" y="35.500" font-family="Open Sans" font-size="23" font-weight="500" fill="#fff">tv</text>`),
  music: tile('#fb5a70', '#fa2440', `<path d="M21 15.500L41 11v5.500L23.500 20.500V40c0 3.500-3 5.500-6.500 5.500-3 0-5-1.500-5-4 0-3 3-4.500 6-4.800 2-.2 3-.7 3-2.200zM38 15l3-1v21.500c0 3.500-3 5.500-6.300 5.500-3 0-5-1.500-5-4 0-3 3-4.500 5.800-4.800 1.800-.2 2.500-.7 2.500-2.200z" fill="#fff"/>`),
  podcasts: tile('#c55ae8', '#7a2bbd', `<g fill="none" stroke="#fff" stroke-width="2.400"><path d="M17 42a18 18 0 1121 0"/><path d="M19 34.500a11.500 11.500 0 1117 0"/></g><circle cx="27.500" cy="24.500" r="4.500" fill="#fff"/><path d="M23.500 34c0-4 8-4 8 0l-1 11c-.4 3.600-5.600 3.600-6 0z" fill="#fff"/>`),
  news: tile('#fff', '#fff', `<path d="M15 11.500L43.500 39v4.500H40L11.500 16v-4.500zM29 11.500h14.500V26zM11.500 29L26 43.500H11.500z" fill="#f6365b"/>`),
  keynote: tile('#2bb9fb', '#1765f2', `<path d="M14 8h27l3 16.500H11z" fill="#f6f6f8"/><path d="M15.500 20.500h24" stroke="#9aa3ad" stroke-width="1.500"/><circle cx="27.500" cy="14.500" r="4.800" fill="#f4b52b"/><path d="M27.500 14.500v-4.800a4.800 4.800 0 00-3.500 8z" fill="#35b567"/><path d="M27.500 14.500l-3.500 3.300a4.800 4.800 0 007 0z" fill="#d8429a"/><path d="M27.500 14.500l3.500 3.300a4.800 4.800 0 00-3.500-8z" fill="#3b84e8"/><path d="M26.200 25h2.600v19h-2.600zM19 44h17v2.600H19z" fill="#e9f0fb"/>`),
  numbers: tile('#6bf06a', '#1fc62b', `<rect x="10" y="36" width="6.500" height="10.500" rx="1" fill="#fff"/><rect x="19.500" y="26" width="6.500" height="20.500" rx="1" fill="#fff"/><rect x="29" y="8" width="6.500" height="38.500" rx="1" fill="#fff"/><rect x="38.500" y="18" width="6.500" height="28.500" rx="1" fill="#fff"/>`),
  pages: tile('#fda827', '#f58016', `<path d="M43 10.500c2.500 0 3 1.500 2 3.500L24 35 11.500 45.500l-2 .5.500-2.500L21 30z" fill="#f5f5f3"/><path d="M23 30l4 3.500" stroke="#b9b3a8" stroke-width="1.500"/><path d="M22 46h24.500" stroke="#fcd9a6" stroke-width="1.800"/>`),
  appstore: tile('#1cb1fb', '#1562e8', `<g stroke="#fff" stroke-width="4.200" stroke-linecap="round" fill="none"><path d="M30 12L17 35M25 12l17 30.500M10.500 33.500h12.500M35 33.500h9.500M14.500 40.500l-1 1.500"/></g>`),
  settings: tile('#d2d3d6', '#8f9194', `<circle cx="27.500" cy="27.500" r="24" fill="#232426"/><circle cx="27.500" cy="27.500" r="20.500" fill="#77797c"/>${ticks(27.500, 27.500, 22.500, 56, 2.500, '#8c8e91', 1)}<circle cx="27.500" cy="27.500" r="16.500" fill="#4d4f52" stroke="#2b2c2f" stroke-width="2"/><circle cx="27.500" cy="27.500" r="14.500" fill="none" stroke="#b4b6b9" stroke-width="2"/><path d="M27.500 27.500h14M27.500 27.500l-7.500-12M27.500 27.500l-7.500 12" stroke="#b4b6b9" stroke-width="3"/><circle cx="27.500" cy="27.500" r="4.500" fill="#b4b6b9"/><circle cx="27.500" cy="27.500" r="2" fill="#3a3b3e"/>`),
  cloud: `<path d="M1 -1h53a4 4 0 014 4v21H-3V3a4 4 0 014-4z" fill="#7ccf45"/><path d="M-3 32h61v7a5 5 0 01-5 5H2a5 5 0 01-5-5z" fill="#7ccf45"/><path d="M2 32c-3-5-3-12 7-14C11 1 40 1 42 18c11 1 14 9 11 14z" fill="#fff"/><path d="M19 49h17c3 1 4 4 4.500 8h-26c.5-4 1.500-7 4.500-8z" fill="#68bd35"/>`,
  word: office('W', '#41a5ee', '#2b7cd3', '#185abd', '#103f91', '#1a55b8'),
  excel: office('X', '#33c481', '#21a366', '#107c41', '#185c37', '#107c41'),
  messages: tile('#64f67a', '#14c932', `<ellipse cx="28" cy="27" rx="20.500" ry="17" fill="#eefbef"/><path d="M18 40c0 3-1.500 5-4 6 4 .5 8-1 10-4z" fill="#d9f5dc"/>`),
  steam: `<defs>${grad('g', '#11204a', '#1290c4')}</defs><g transform="translate(-3.500 -3.500)"><circle cx="31" cy="31" r="31" fill="url(#g)"/><path d="M.5 28l17 7 11.500-13A12 12 0 1143 33.500L30 41.500c-1 5-4 8-9 7.500-4 0-7-3-8-6.500L1 38C0 35 0 31 .5 28z" fill="#e4e4e6"/><circle cx="41" cy="22" r="7.500" fill="none" stroke="#1a2f5e" stroke-width="2"/><path d="M17 37a6 6 0 113 8.500" fill="none" stroke="#1a2f5e" stroke-width="2"/></g>`,
  chrome: tile('#fbfbfb', '#eaeaea', `<circle cx="27.500" cy="27.500" r="23.500" fill="#2fa24f"/><path d="M27.500 27.500L7.150 15.750A23.500 23.500 0 0147.850 15.750z" fill="#e6412f"/><path d="M27.500 15.750h20.350A23.500 23.500 0 0127.500 51L37.700 33.400z" fill="#fbc116"/><path d="M7.150 15.750L17.300 33.400l10.200-5.900-2-11.700z" fill="#e6412f"/><circle cx="27.500" cy="27.500" r="11.800" fill="#fff"/><circle cx="27.500" cy="27.500" r="9.300" fill="#2b74e2"/>`),
  trash: `<defs><linearGradient id="g"><stop offset="0" stop-color="#4f5457"/><stop offset=".3" stop-color="#6d7377"/><stop offset=".7" stop-color="#5d6467"/><stop offset="1" stop-color="#81878b"/></linearGradient></defs><g transform="translate(3 -3)"><path d="M1 6l6.500 50c1 5 32 5 33 0L49 6z" fill="url(#g)"/><ellipse cx="25" cy="5.500" rx="24.500" ry="5" fill="#43474a" stroke="#8d9396" stroke-width="1.200"/></g>`,
};

define('dock-app', `
  :host { display: flex; flex-direction: column; align-items: center; flex: none; width: 55px; height: 74px; }
  button { display: block; }
  svg { display: block; overflow: visible; }
  .dot { width: 5px; height: 5px; margin-top: 12px; border-radius: 50%; background: #c8bca4; }
`, el => `<button aria-label="${el.getAttribute('app')}"><svg width="55" height="55" viewBox="0 0 55 55">${DOCK[el.getAttribute('app')]}</svg></button>${el.hasAttribute('running') ? '<span class="dot"></span>' : ''}`);

const RUNNING = ['finder', 'safari', 'maps', 'notes', 'tv', 'music', 'news', 'word', 'messages', 'steam', 'chrome', 'excel'];
define('mac-dock', `
  :host { display: flex; justify-content: space-between; flex: none; height: 87px; margin: 9px 81px 8px; padding: 12px 11px 0; border: 1px solid #665334; border-radius: 26px; background: linear-gradient(90deg, #3d2b13, #46320f 20%, #3c2812 50%, #3a2811); }
  hr { width: 1px; height: 64px; margin: 0 8px; border: 0; background: #6f6048; }
`, ['finder', 'launchpad', 'safari', 'maps', 'contacts', 'reminders', 'notes', 'tv', 'music', 'podcasts', 'news', 'keynote', 'numbers', 'pages', 'appstore', 'settings', 'cloud', '-', 'word', 'messages', 'steam', 'chrome', 'excel', '-', 'trash']
  .map(a => a === '-' ? '<hr>' : `<dock-app app="${a}" ${RUNNING.includes(a) ? 'running' : ''}></dock-app>`).join(''));
</script>
</body>
</html>
